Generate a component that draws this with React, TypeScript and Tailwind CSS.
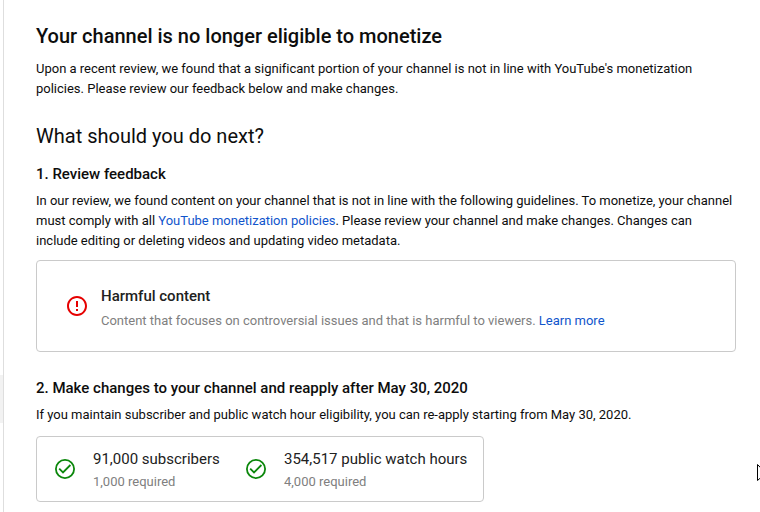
import React from 'react';

const stats = [
  { label: '91,000 subscribers', required: '1,000 required', width: 'w-[191px]' },
  { label: '354,517 public watch hours', required: '4,000 required', width: 'w-[220px]' },
];

const ErrorIcon = () => (
  <svg viewBox="0 0 24 24" className="w-6 h-6 shrink-0 fill-[#e60000]">
    <path d="M11 15h2v2h-2zm0-8h2v6h-2zm.99-5C6.47 2 2 6.48 2 12s4.47 10 9.99 10C17.52 22 22 17.52 22 12S17.52 2 11.99 2zM12 20c-4.42 0-8-3.58-8-8s3.58-8 8-8 8 3.58 8 8-3.58 8-8 8z" />
  </svg>
);

const CheckIcon = () => (
  <svg viewBox="0 0 24 24" className="w-6 h-6 shrink-0 fill-none stroke-[#0b870b]">
    <circle cx="12" cy="12" r="9.1" strokeWidth="1.8" />
    <path d="m6.200 11.600 3.800 3.800 7.400-7.400" strokeWidth="1.800" />
  </svg>
);

const App = () => {
  return (
    <div className="relative flex w-[760px] h-[512px] overflow-hidden bg-white font-['Roboto',sans-serif] text-[13px] leading-5 text-[#0d0d0d]">
      {/* Sidebar edge */}
      <div className="w-1 shrink-0 border-r border-[#dedede] pt-[375px]">
        <div className="h-12 bg-[#f2f2f2]"></div>
      </div>

      <main className="w-[732px] shrink-0 pl-8 pt-6">
        <h1 className="text-xl leading-6 font-medium whitespace-nowrap">
          Your channel is no longer eligible to monetize
        </h1>
        <p className="mt-[11px] whitespace-nowrap tracking-[-0.006px]">
          Upon a recent review, we found that a significant portion of your channel is not in line with YouTube's monetization
          <br />
          policies. Please review our feedback below and make changes.
        </p>

        <h2 className="mt-[25px] text-xl leading-6">What should you do next?</h2>

        <h3 className="mt-4 text-[15px] leading-5 font-medium">1. Review feedback</h3>
        <p className="mt-[7px] whitespace-nowrap tracking-[-0.006px]">
          In our review, we found content on your channel that is not in line with the following guidelines. To monetize, your channel
          <br />
          must comply with all <a href="#" className="text-[#1155cc]">YouTube monetization policies</a>. Please review your channel and make changes. Changes can
          <br />
          include editing or deleting videos and updating video metadata.
        </p>

        <div className="mt-[9px] flex h-[92px] items-center gap-3 rounded border border-[#cacaca] pl-7">
          <ErrorIcon />
          <div className="pt-1">
            <h4 className="text-[15px] leading-5 font-medium text-[#212121]">Harmful content</h4>
            <p className="mt-[5px] text-[#808080] tracking-[-0.006px]">
              Content that focuses on controversial issues and that is harmful to viewers.{' '}
              <a href="#" className="text-[#1155cc]">Learn more</a>
            </p>
          </div>
        </div>

        <h3 className="mt-[26px] text-[15px] leading-5 font-medium">
          2. Make changes to your channel and reapply after May 30, 2020
        </h3>
        <p className="mt-[7px] tracking-[-0.006px]">
          If you maintain subscriber and public watch hour eligibility, you can re-apply starting from May 30, 2020.
        </p>

        <div className="mt-[11px] flex h-[66px] w-[448px] items-center rounded border border-[#cacaca] pl-4">
          {stats.map((stat) => (
            <div key={stat.label} className={`flex items-center gap-4 whitespace-nowrap ${stat.width}`}>
              <CheckIcon />
              <div className="pt-0.5">
                <div className="text-[15px] leading-6 text-[#212121]">{stat.label}</div>
                <div className="leading-[22px] text-[#808080]">{stat.required}</div>
              </div>
            </div>
          ))}
        </div>
      </main>

      {/* Mouse pointer, cut off by the window edge */}
      <svg viewBox="0 0 12 19" className="absolute left-[757px] top-[464px] w-3 h-[19px] fill-white stroke-black">
        <path d="M.5.5v16l4-3.500 2.500 5 2-1-2.500-5h5z" />
      </svg>
    </div>
  );
};

export default App;
